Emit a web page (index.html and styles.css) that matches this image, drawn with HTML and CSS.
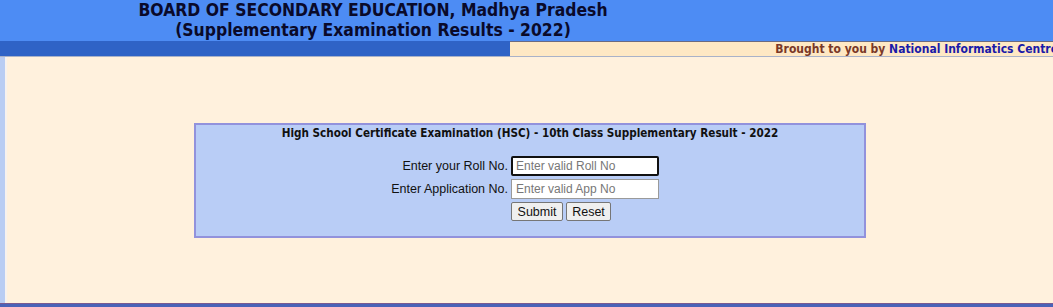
FILE: index.html
```html
<!DOCTYPE html>
<html>
<head>
<meta charset="utf-8">
<link rel="stylesheet" href="styles.css">
</head>
<body>
<div class="header">
  <div class="title">
    <div>BOARD OF SECONDARY EDUCATION, Madhya Pradesh</div>
    <div>(Supplementary Examination Results - 2022)</div>
  </div>
</div>
<div class="strip">
  <div class="strip-left"></div>
  <div class="strip-right"><span class="credit">Brought to you by <span class="nic">National Informatics Centre</span></span></div>
</div>
<div class="main">
  <div class="side"></div>
  <div class="content">
    <div class="box">
      <div class="box-title">High School Certificate Examination (HSC) - 10th Class Supplementary Result - 2022</div>
      <form class="form">
        <label class="lbl" for="roll">Enter your Roll No.</label>
        <input class="inp focused" id="roll" type="text" placeholder="Enter valid Roll No">
        <label class="lbl" for="app">Enter Application No.</label>
        <input class="inp" id="app" type="text" placeholder="Enter valid App No">
        <span></span>
        <div class="buttons">
          <button type="button" class="btn btn-submit">Submit</button>
          <button type="button" class="btn btn-reset">Reset</button>
        </div>
      </form>
    </div>
  </div>
</div>
<div class="bottom"></div>
</body>
</html>
```
FILE: styles.css
```css
html, body {
  margin: 0;
  padding: 0;
}
body {
  width: 1053px;
  height: 307px;
  overflow: hidden;
  background: #fff1dd;
  font-family: "Liberation Sans", Arial, sans-serif;
}
.header {
  height: 41px;
  background: #4d8cf4;
}
.title {
  width: 746px;
  text-align: center;
  font-family: "DejaVu Sans Condensed", "DejaVu Sans", sans-serif;
  font-weight: bold;
  font-size: 17.4px;
  line-height: 20px;
  color: #0a0a2a;
}
.strip {
  display: flex;
  height: 15px;
}
.strip-left {
  width: 510px;
  background: #2f63c6;
}
.strip-right {
  flex: 1;
  background: #fee8c4;
  border-top: 1px solid #6a6a80;
  display: flex;
  justify-content: flex-end;
  overflow: hidden;
  white-space: nowrap;
}
.credit {
  font-family: "DejaVu Sans Condensed", "DejaVu Sans", sans-serif;
  font-weight: bold;
  font-size: 12px;
  line-height: 14px;
  color: #7a3828;
  margin-right: -5px;
}
.nic {
  color: #1a1aa8;
}
.main {
  display: flex;
  height: 246px;
  border-top: 1px solid #a9b2c8;
}
.side {
  width: 5px;
  background: #b9cdf3;
  border-right: 2px solid #f7f2ee;
}
.content {
  flex: 1;
  padding-top: 66px;
  padding-left: 187px;
}
.box {
  width: 668px;
  height: 111px;
  border: 2px solid #9292dc;
  background: #b9cdf6;
}
.box-title {
  text-align: center;
  font-family: "DejaVu Sans Condensed", "DejaVu Sans", sans-serif;
  font-weight: bold;
  font-size: 11.6px;
  line-height: 14px;
  color: #111;
  padding-top: 1px;
  margin-bottom: 16px;
}
.form {
  display: grid;
  grid-template-columns: 312px 148px;
  column-gap: 3px;
  row-gap: 3px;
  align-items: center;
  margin: 0;
}
.lbl {
  text-align: right;
  font-size: 12.5px;
  color: #111;
}
.inp {
  box-sizing: border-box;
  width: 148px;
  height: 20px;
  margin: 0;
  padding: 0 4px;
  border: 1px solid #9a9a9a;
  background: #fff;
  font-family: "Liberation Sans", Arial, sans-serif;
  font-size: 12px;
  outline: none;
}
.inp::placeholder {
  color: #777;
}
.inp.focused {
  border: 2px solid #111;
  border-radius: 2px;
  padding: 0 3px;
}
.buttons {
  display: flex;
  gap: 3px;
}
.btn {
  box-sizing: border-box;
  height: 19px;
  margin: 0;
  padding: 0;
  border: 1px solid #767676;
  border-radius: 2px;
  background: #efefef;
  font-family: "Liberation Sans", Arial, sans-serif;
  font-size: 12.5px;
  color: #111;
}
.btn-submit { width: 52px; }
.btn-reset { width: 45px; }
.bottom {
  height: 4px;
  background: #4a62b8;
  border-top: 1px solid #7a5a90;
}
```
